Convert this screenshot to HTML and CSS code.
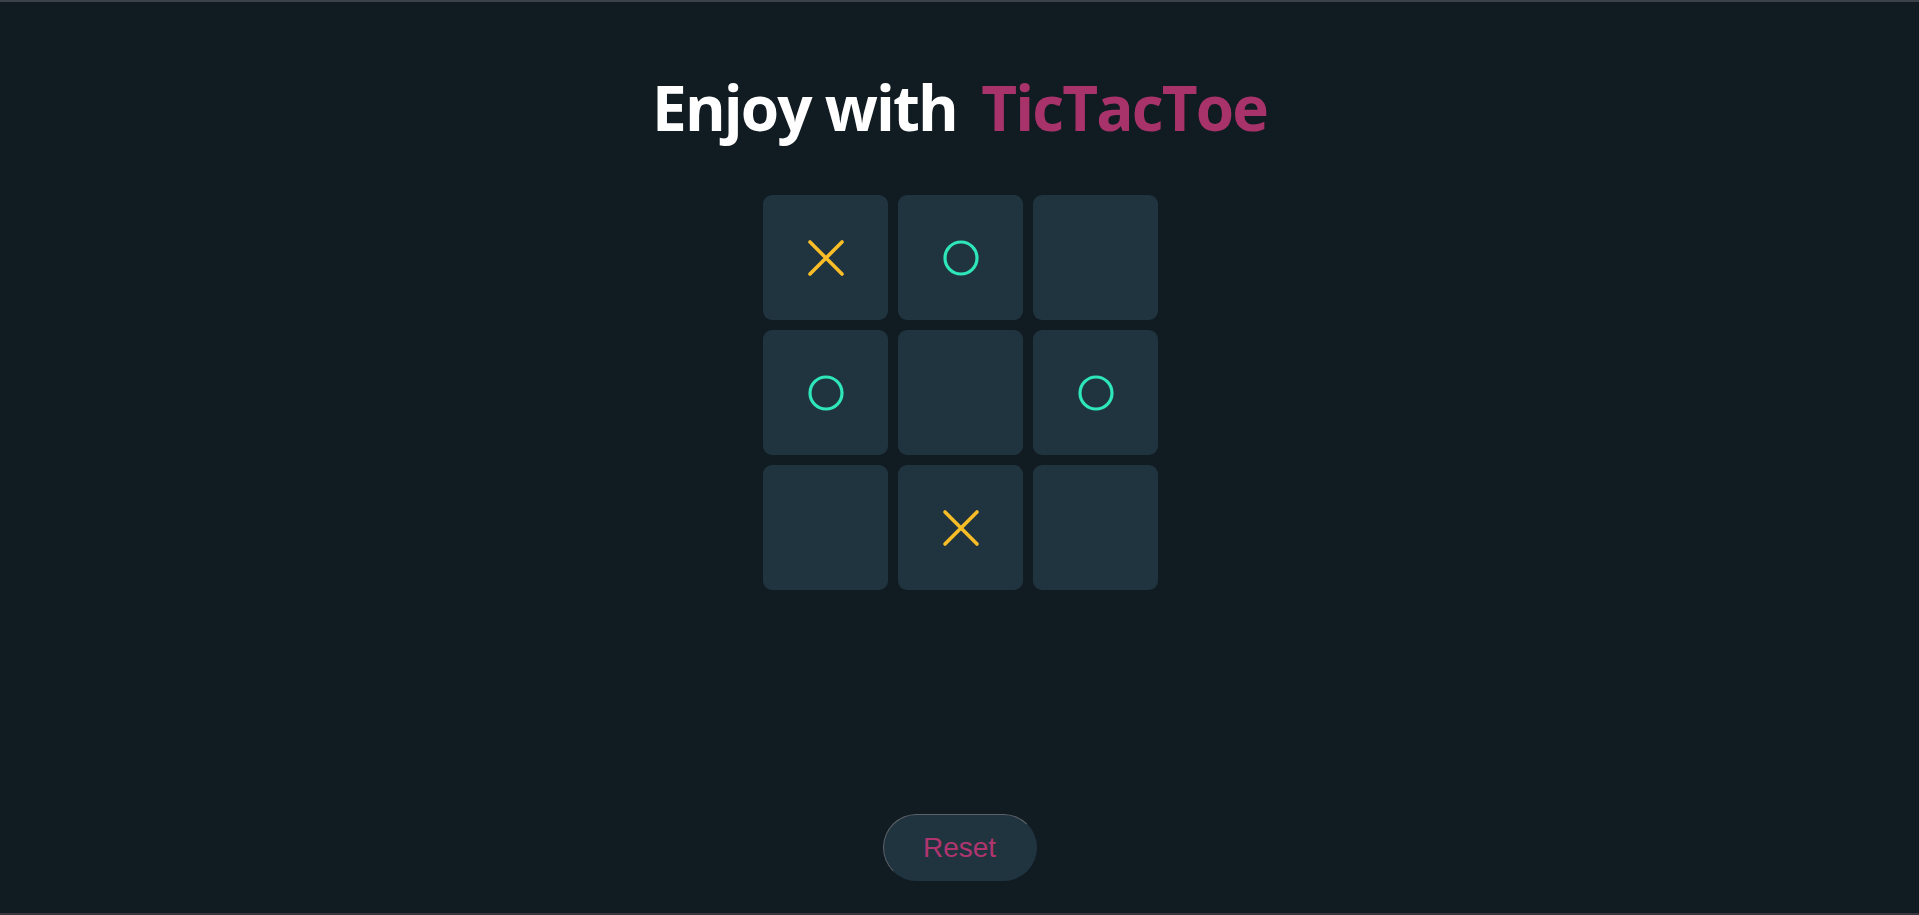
FILE: index.html
```html
<!DOCTYPE html>
<html lang="en">
<head>
<meta charset="utf-8">
<title>TicTacToe</title>
<link rel="stylesheet" href="styles.css">
</head>
<body>
<main class="app">
  <h1 class="title">Enjoy with <span class="brand">TicTacToe</span></h1>
  <div class="board">
    <div class="cell"><svg class="mark" viewBox="0 0 36 36"><path class="x" d="M2 2 L34 34 M34 2 L2 34"/></svg></div>
    <div class="cell"><svg class="mark" viewBox="0 0 36 36"><circle class="o" cx="18" cy="18" r="16"/></svg></div>
    <div class="cell"></div>
    <div class="cell"><svg class="mark" viewBox="0 0 36 36"><circle class="o" cx="18" cy="18" r="16"/></svg></div>
    <div class="cell"></div>
    <div class="cell"><svg class="mark" viewBox="0 0 36 36"><circle class="o" cx="18" cy="18" r="16"/></svg></div>
    <div class="cell"></div>
    <div class="cell"><svg class="mark" viewBox="0 0 36 36"><path class="x" d="M2 2 L34 34 M34 2 L2 34"/></svg></div>
    <div class="cell"></div>
  </div>
  <button class="reset" type="button">Reset</button>
</main>
</body>
</html>
```
FILE: styles.css
```css
html, body {
  margin: 0;
  padding: 0;
  background: #111b22;
}
.app {
  box-sizing: border-box;
  min-height: 100vh;
  border-top: 2px solid #3b4249;
  border-bottom: 2px solid #3a3640;
  display: flex;
  flex-direction: column;
  align-items: center;
  padding: 63px 0 32px;
}
.title {
  margin: 0;
  font-family: "Open Sans", "Noto Sans", sans-serif;
  font-weight: 700;
  font-size: 62px;
  line-height: 84px;
  color: #ffffff;
  letter-spacing: -1.9px;
}
.brand {
  color: #a8336a;
  margin-left: 10px;
}
.board {
  margin-top: 46px;
  margin-left: 2px;
  display: grid;
  grid-template-columns: repeat(3, 125px);
  grid-template-rows: repeat(3, 125px);
  gap: 10px;
}
.cell {
  background: #203440;
  border-radius: 9px;
  display: flex;
  align-items: center;
  justify-content: center;
}
.mark {
  width: 36px;
  height: 36px;
  overflow: visible;
}
.x {
  stroke: #f9bd27;
  stroke-width: 3.6;
  stroke-linecap: round;
  fill: none;
}
.o {
  stroke: #2ee6b8;
  stroke-width: 3.2;
  fill: none;
}
.reset {
  margin-top: auto;
  width: 154px;
  height: 67px;
  border-radius: 34px;
  background: #203440;
  border: 1.5px solid;
  border-color: #5c6168 #203440 #203440 #5c6168;
  color: #b0356f;
  font-family: "Liberation Sans", Arial, sans-serif;
  font-size: 28px;
  padding: 0;
}
```
